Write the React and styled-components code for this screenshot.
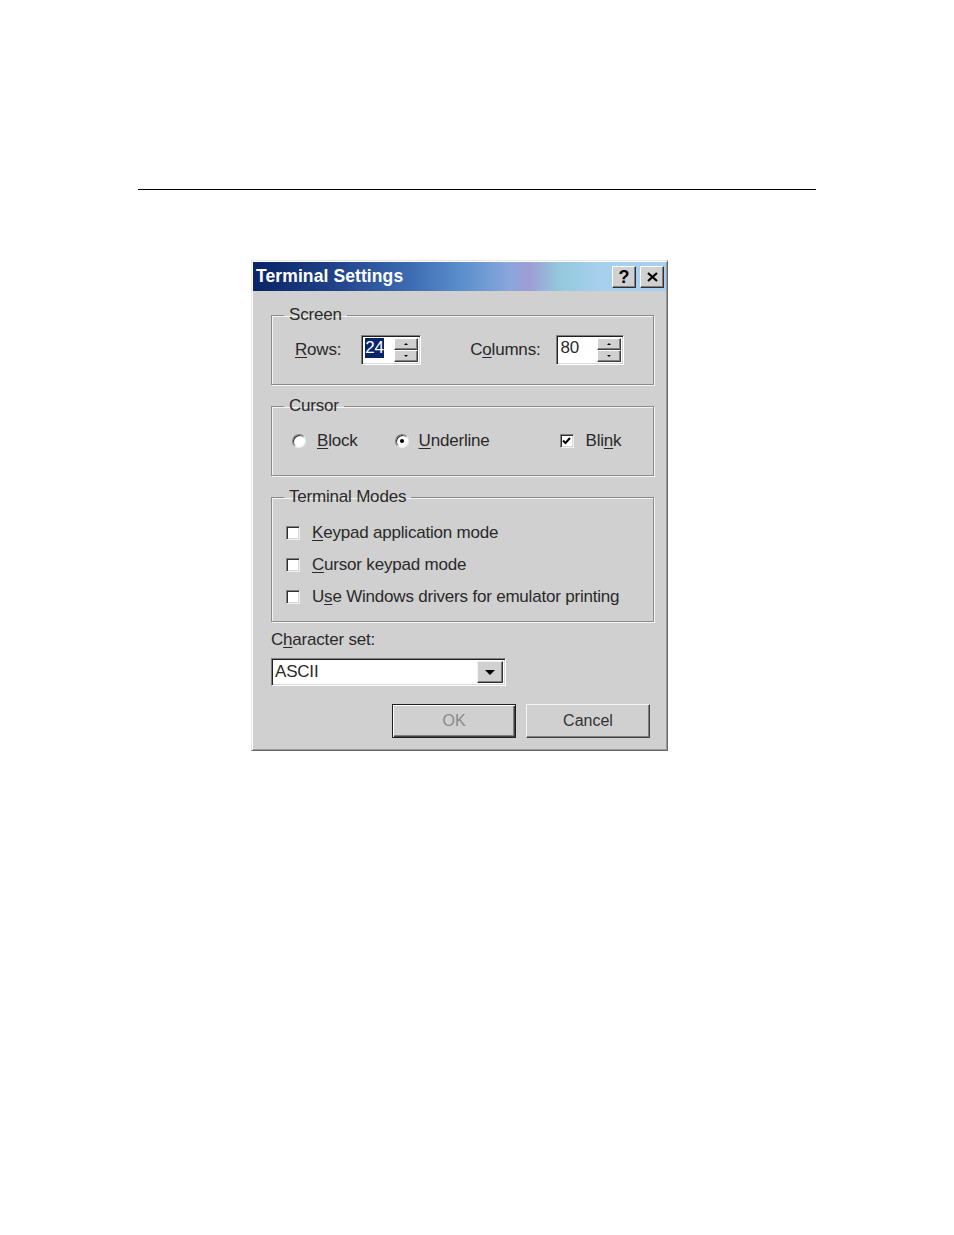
import React from "react"
import styled, { createGlobalStyle } from "styled-components"

const Global = createGlobalStyle`
  html, body {
    margin: 0;
    padding: 0;
    background: #ffffff;
  }
  body {
    font-family: "Liberation Sans", Arial, sans-serif;
  }
`

const colors = {
  face: "#d0d0d0",
  shadow: "#808080",
  dark: "#404040",
  light: "#ffffff",
  text: "#2a2a2a",
  navy: "#0a246a",
}

const Page = styled.div`
  width: 954px;
  height: 1235px;
  padding-top: 189px;
  box-sizing: border-box;
`

const Rule = styled.hr`
  margin: 0 0 0 138px;
  width: 678px;
  height: 0;
  border: none;
  border-top: 1.5px solid #000;
`

const Window = styled.div`
  margin: 70px 0 0 251px;
  width: 417px;
  height: 491px;
  box-sizing: border-box;
  background: ${colors.face};
  border: 1px solid;
  border-color: #e8e8e8 #6a6a6a #6a6a6a #e8e8e8;
  box-shadow: inset 1px 1px 0 #fff, inset -1px -1px 0 #9a9a9a;
  padding: 1px;
  display: flex;
  flex-direction: column;
  color: ${colors.text};
  font-size: 17px;
  letter-spacing: -0.2px;
`

const TitleBar = styled.div`
  height: 29px;
  display: flex;
  align-items: center;
  padding: 0 2px 0 3px;
  background: linear-gradient(
    90deg,
    #0a2466 0%,
    #1e3f86 18%,
    #3d6cb2 38%,
    #5f93cf 52%,
    #8aa6dc 62%,
    #9d9ed6 67%,
    #94c8dc 74%,
    #a6d0ee 84%,
    #a9cff0 100%
  );
`

const Title = styled.span`
  flex: 1;
  color: #fff;
  font-weight: bold;
  font-size: 17.5px;
  letter-spacing: 0.1px;
`

const CaptionButton = styled.button`
  width: 24px;
  height: 22px;
  margin-left: ${(p) => (p.$gap ? "4px" : "0")};
  padding: 0;
  background: ${colors.face};
  border: 1px solid;
  border-color: #fff #303030 #303030 #fff;
  box-shadow: inset -1px -1px 0 ${colors.shadow};
  display: flex;
  align-items: center;
  justify-content: center;
  font-family: "Liberation Sans", Arial, sans-serif;
  font-weight: bold;
  font-size: 18px;
  color: #000;
  line-height: 1;
`

const Body = styled.div`
  flex: 1;
  display: flex;
  flex-direction: column;
  padding: 15px 12px 0 18px;
`

const Group = styled.fieldset`
  margin: 0 0 ${(p) => p.$mb || 0}px 0;
  padding: 11px 0 ${(p) => p.$pb}px 0;
  border: 1px solid #8c8c8c;
  box-shadow: 1px 1px 0 #f4f4f4, inset 1px 1px 0 #f4f4f4;
  min-width: 0;
`

const Legend = styled.legend`
  margin-left: 12px;
  padding: 0 5px;
  line-height: 18px;
  font-size: 17px;
`

const Row = styled.div`
  display: flex;
  align-items: center;
  height: ${(p) => p.$h || 30}px;
  padding-left: ${(p) => p.$pl}px;
`

const Label = styled.span`
  margin-right: ${(p) => p.$mr || 0}px;
  margin-left: ${(p) => p.$ml || 0}px;
  white-space: nowrap;
`

const U = styled.span`
  text-decoration: underline;
  text-underline-offset: 2px;
  text-decoration-thickness: 1px;
`

const Sunken = styled.div`
  display: flex;
  height: 30px;
  box-sizing: border-box;
  border: 1px solid;
  border-color: ${colors.shadow} #fff #fff ${colors.shadow};
  box-shadow: inset 1px 1px 0 #202020, inset -1px -1px 0 #d8d8d8;
  background: #fff;
  width: ${(p) => p.$w}px;
  padding: 2px;
`

const SpinText = styled.div`
  flex: 1;
  display: flex;
  align-items: flex-start;
  padding-left: 1px;
  line-height: 20px;
`

const Selected = styled.span`
  background: ${colors.navy};
  color: #fff;
`

const SpinButtons = styled.div`
  width: 24px;
  display: flex;
  flex-direction: column;
`

const SpinHalf = styled.div`
  flex: 1;
  background: ${colors.face};
  border: 1px solid;
  border-color: #fff #404040 #404040 #fff;
  box-shadow: inset -1px -1px 0 ${colors.shadow};
  display: flex;
  align-items: center;
  justify-content: center;

  &::after {
    content: "";
    width: 0;
    height: 0;
    border-left: 2px solid transparent;
    border-right: 2px solid transparent;
    ${(p) => (p.$down ? "border-top" : "border-bottom")}: 2px solid #000;
  }
`

const Radio = styled.span`
  width: 14px;
  height: 14px;
  border-radius: 50%;
  background: #fff;
  box-sizing: border-box;
  border: 1px solid;
  border-color: #808080 #ececec #ececec #808080;
  box-shadow: inset 1px 1px 0 #303030;
  display: inline-flex;
  align-items: center;
  justify-content: center;
  flex-shrink: 0;

  &::after {
    content: "";
    width: 4px;
    height: 4px;
    border-radius: 50%;
    background: ${(p) => (p.$on ? "#000" : "transparent")};
  }
`

const Check = styled.span`
  width: 14px;
  height: 14px;
  background: #fff;
  box-sizing: border-box;
  border: 1px solid;
  border-color: #808080 #f0f0f0 #f0f0f0 #808080;
  box-shadow: inset 1px 1px 0 #303030, inset -1px -1px 0 #d8d8d8;
  display: inline-flex;
  align-items: center;
  justify-content: center;
  flex-shrink: 0;
`

const Field = styled.div`
  margin-top: 9px;
  line-height: 18px;
`

const Combo = styled(Sunken)`
  height: 28px;
  margin-top: 9px;
  align-items: stretch;
`

const ComboText = styled.div`
  flex: 1;
  line-height: 22px;
  padding-left: 1px;
`

const DropButton = styled.div`
  width: 24px;
  background: ${colors.face};
  border: 1px solid;
  border-color: #f0f0f0 #303030 #303030 #f0f0f0;
  box-shadow: inset -1px -1px 0 ${colors.shadow};
  display: flex;
  align-items: center;
  justify-content: center;

  &::after {
    content: "";
    border-left: 5px solid transparent;
    border-right: 5px solid transparent;
    border-top: 5px solid #000;
    margin-top: 1px;
  }
`

const Buttons = styled.div`
  display: flex;
  justify-content: flex-end;
  gap: 10px;
  margin-top: 18px;
  padding-right: 4px;
`

const Button = styled.button`
  width: 124px;
  height: 34px;
  background: ${colors.face};
  font-family: "Liberation Sans", Arial, sans-serif;
  font-size: 16px;
  color: ${(p) => (p.$disabled ? "#8a8a8a" : "#333")};
  border: 1px solid;
  border-color: ${(p) =>
    p.$default ? "#202020" : "#f4f4f4 #404040 #404040 #f4f4f4"};
  box-shadow: ${(p) =>
    p.$default
      ? "inset 1px 1px 0 #fff, inset -1px -1px 0 #404040, inset -2px -2px 0 #808080"
      : "inset -1px -1px 0 #808080"};
  padding: 0;
`

const CheckMark = () => (
  <svg width="9" height="8" viewBox="0 0 9 8">
    <path d="M1 3.5 L3.5 6 L8 1" fill="none" stroke="#000" strokeWidth="2" />
  </svg>
)

const SpinBox = ({ width, children }) => (
  <Sunken $w={width}>
    <SpinText>{children}</SpinText>
    <SpinButtons>
      <SpinHalf />
      <SpinHalf $down />
    </SpinButtons>
  </Sunken>
)

const App = () => {
  return (
    <Page>
      <Global />
      <Rule />
      <Window>
        <TitleBar>
          <Title>Terminal Settings</Title>
          <CaptionButton>?</CaptionButton>
          <CaptionButton $gap>
            <svg width="11" height="10" viewBox="0 0 11 10">
              <path d="M1 1 L10 9 M10 1 L1 9" stroke="#000" strokeWidth="2.2" />
            </svg>
          </CaptionButton>
        </TitleBar>
        <Body>
          <Group $pb={19} $mb={12}>
            <Legend>Screen</Legend>
            <Row $pl={23}>
              <Label $mr={20}>
                <U>R</U>ows:
              </Label>
              <SpinBox width={60}>
                <Selected>24</Selected>
              </SpinBox>
              <Label $ml={49} $mr={16}>
                C<U>o</U>lumns:
              </Label>
              <SpinBox width={68}>80</SpinBox>
            </Row>
          </Group>
          <Group $pb={19} $mb={12}>
            <Legend>Cursor</Legend>
            <Row $pl={20}>
              <Radio />
              <Label $ml={11} $mr={37}>
                <U>B</U>lock
              </Label>
              <Radio $on />
              <Label $ml={10} $mr={70}>
                <U>U</U>nderline
              </Label>
              <Check>
                <CheckMark />
              </Check>
              <Label $ml={12}>
                Bli<U>n</U>k
              </Label>
            </Row>
          </Group>
          <Group $pb={8}>
            <Legend>Terminal Modes</Legend>
            <Row $pl={14} $h={32}>
              <Check />
              <Label $ml={12}>
                <U>K</U>eypad application mode
              </Label>
            </Row>
            <Row $pl={14} $h={32}>
              <Check />
              <Label $ml={12}>
                <U>C</U>ursor keypad mode
              </Label>
            </Row>
            <Row $pl={14} $h={32}>
              <Check />
              <Label $ml={12}>
                U<U>s</U>e Windows drivers for emulator printing
              </Label>
            </Row>
          </Group>
          <Field>
            C<U>h</U>aracter set:
          </Field>
          <Combo $w={235}>
            <ComboText>ASCII</ComboText>
            <DropButton />
          </Combo>
          <Buttons>
            <Button $default $disabled>
              OK
            </Button>
            <Button>Cancel</Button>
          </Buttons>
        </Body>
      </Window>
    </Page>
  )
}

export default App
